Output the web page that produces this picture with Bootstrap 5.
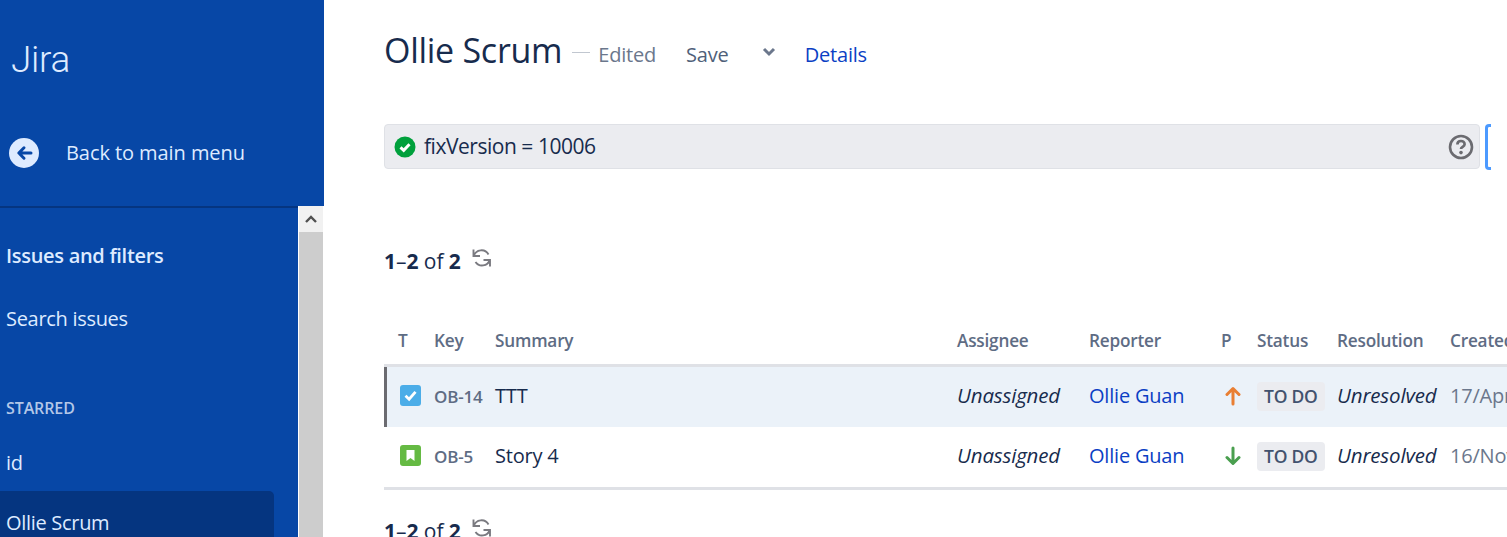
<!DOCTYPE html>
<html lang="en">
<head>
<meta charset="utf-8">
<title>Ollie Scrum</title>
<link rel="stylesheet" href="https://cdn.jsdelivr.net/npm/bootstrap@5.3.0/dist/css/bootstrap.min.css">
<style>
html,body{height:537px;overflow:hidden;background:#fff}
body{font-family:"Open Sans","Noto Sans","Liberation Sans",sans-serif;color:#172b4d;font-size:19px;letter-spacing:-.35px}
.app-shell{height:537px}
.side{width:324px;flex:none;background:#0747a6;color:#deebff;overflow:hidden}
.side-top{height:206px;flex:none;padding:34px 0 0 11px}
.side-brand{font-family:Roboto,"Open Sans",sans-serif;font-size:37px;font-weight:300;line-height:52px;letter-spacing:-.3px;margin-bottom:50px}
.side-back{margin-left:-2px;gap:27px;font-size:20px;line-height:30px;letter-spacing:-.07px;padding-top:2px}
.back-ico{width:30px;height:30px;flex:none;display:block}
.side-rule{height:2px;flex:none;background:#053580;width:299px}
.side-body{min-height:0}
.side-nav{width:298px;flex:none;padding:33px 0 0 6px;line-height:30px;font-size:20px;letter-spacing:-.3px}
.side-head{font-weight:600;line-height:30px}
.side-link{margin-top:33px}
.side-label{font-size:16px;font-weight:600;color:#b3c7e8;margin-top:64px;line-height:20px;letter-spacing:-.1px}
.side-id{margin-top:30px}
.side-active{background:#053580;width:274px;margin:13px 0 0 -6px;padding:17px 0 0 6px;height:60px;border-radius:0 5px 0 0}
.side-scroll{width:26px;flex:none;background:#fff;margin-top:-2px}
.scroll-btn{width:24px;height:26px;margin-left:1px;background:#f1f1f1;display:flex;align-items:center;justify-content:center}
.scroll-track{width:24px;height:330px;margin-left:1px;background:#cdcdcd}
.page{padding:0 0 0 60px;min-width:0}
.page-head{height:124px;padding-top:26px;align-items:flex-start}
.page-title{font-size:34px;line-height:48px;font-weight:400;margin:0;letter-spacing:-.27px}
.dash{width:18px;height:1px;background:#c1c7d0;margin:26px 8px 0 10px}
.meta{line-height:30px;margin-top:14px;color:#6b778c;font-size:20px;letter-spacing:-.22px}
.meta-save{color:#505f79;margin:14px 0 0 30px;line-height:30px;font-size:20px;letter-spacing:-.15px}
.meta-chev{margin:21px 0 0 33px;display:block}
.meta-link{color:#0b3fc4;text-decoration:none;margin:14px 0 0 29px;line-height:30px;font-size:20px;letter-spacing:-.2px}
.jql-row{gap:5px}
.jql-box{width:1096px;height:45px;flex:none;background:#ebecf0;border:1px solid #dfe1e6;border-radius:4px;padding:0 5px 0 9px;font-size:21px;letter-spacing:-.47px}
.jql-ok{margin-right:8px;display:block}
.jql-bracket{width:6px;height:46px;border:3px solid #4c9aff;border-right:0;border-radius:4px 0 0 4px;flex:none}
.pager{margin-top:75px;line-height:32px;font-size:21px;height:32px;letter-spacing:-.05px}
.pager-ref{margin:-7px 0 0 10px;display:block}
.pager b{font-weight:700}
.issue-wrap{margin-top:44px;width:1300px}
.issue-grid{width:1300px;table-layout:fixed;margin:0;border-collapse:separate;border-spacing:0;--bs-table-bg:transparent;--bs-table-color:#172b4d}
.issue-grid th,.issue-grid td{border:0;padding:0 6px;white-space:nowrap;overflow:hidden;vertical-align:middle}
.issue-grid th{height:46px;font-size:17.2px;font-weight:600;color:#5e6c84;vertical-align:top;line-height:32px;padding-top:4px;letter-spacing:-.2px;border-bottom:3px solid #dfe1e6}
.issue-grid td{height:60px;font-size:20px;letter-spacing:-.2px;padding-bottom:3px}
.issue-grid tbody tr:last-child td{height:63px;border-bottom:3px solid #dfe1e6}
.issue-grid tbody tr.cur td{background:#ebf2f9}
.issue-grid tbody tr.cur td:first-child{box-shadow:inset 3px 0 0 #6b6b70}
.issue-grid em{font-size:20.5px;letter-spacing:-.17px}
.w-t{width:44px}.w-k{width:61px}.w-s{width:462px}.w-a{width:132px}.w-r{width:132px}.w-p{width:36px}.w-st{width:80px}.w-res{width:113px}.w-c{width:240px}
.issue-grid th.w-t{padding-left:14px;padding-right:0}
.issue-grid td.cell-t{padding-left:13px;padding-right:0}
.k-key{font-size:17px;font-weight:600;color:#5e6c84;letter-spacing:-.2px}
.person{color:#0b3fc4;text-decoration:none}
.todo{display:inline-block;background:#ebecf0;color:#42526e;font-size:17.5px;font-weight:600;line-height:29px;padding:0 7px;border-radius:4px;letter-spacing:-.25px}
.date{color:#6b778c}
.type-ico,.prio-ico{display:block}
.type-ico{margin-left:3px}
.prio-ico{margin-left:4px}
.pager-end{margin-top:25px}
</style>
</head>
<body>
<div class="app-shell d-flex">
  <aside class="side d-flex flex-column">
    <div class="side-top">
      <div class="side-brand">Jira</div>
      <div class="side-back d-flex align-items-center">
        <svg class="back-ico" viewBox="0 0 30 30"><circle cx="15" cy="15" r="15" fill="#deebff"/><path d="M22 15H10M15 9.8 9.8 15l5.2 5.2" fill="none" stroke="#0747a6" stroke-width="3" stroke-linecap="round" stroke-linejoin="round"/></svg>
        <span>Back to main menu</span>
      </div>
    </div>
    <div class="side-rule"></div>
    <div class="side-body d-flex flex-grow-1">
      <nav class="side-nav">
        <div class="side-head">Issues and filters</div>
        <div class="side-link">Search issues</div>
        <div class="side-label">STARRED</div>
        <div class="side-id">id</div>
        <div class="side-active">Ollie Scrum</div>
      </nav>
      <div class="side-scroll">
        <div class="scroll-btn"><svg width="12" height="8" viewBox="0 0 12 8"><path d="M1 7l5-5 5 5" fill="none" stroke="#505050" stroke-width="2.4"/></svg></div>
        <div class="scroll-track"></div>
      </div>
    </div>
  </aside>
  <main class="page flex-grow-1 overflow-hidden">
    <div class="page-head d-flex">
      <h1 class="page-title">Ollie Scrum</h1>
      <span class="dash"></span>
      <span class="meta">Edited</span>
      <span class="meta-save">Save</span>
      <svg class="meta-chev" width="14" height="10" viewBox="0 0 14 10"><path d="M2 2l5 5 5-5" fill="none" stroke="#6b778c" stroke-width="3"/></svg>
      <a class="meta-link" href="#">Details</a>
    </div>
    <div class="jql-row d-flex">
      <div class="jql-box d-flex align-items-center">
        <svg class="jql-ok" width="22" height="22" viewBox="0 0 22 22"><circle cx="11" cy="11" r="10.5" fill="#00a03c"/><path d="M6.5 11.3l3.2 3 5.8-6" fill="none" stroke="#fff" stroke-width="3"/></svg>
        <span class="flex-grow-1">fixVersion = 10006</span>
        <svg width="26" height="26" viewBox="0 0 26 26"><circle cx="13" cy="13" r="11" fill="none" stroke="#6b6b70" stroke-width="2.6"/><path d="M9.4 10.5c0-4.6 7.2-4.6 7.2-.3 0 2.6-3.6 2.7-3.6 4.8" fill="none" stroke="#6b6b70" stroke-width="2.7"/><circle cx="13" cy="18.6" r="1.8" fill="#6b6b70"/></svg>
      </div>
      <div class="jql-bracket"></div>
    </div>
    <div class="pager d-flex align-items-center">
      <span><b>1</b>–<b>2</b> of <b>2</b></span>
      <svg class="pager-ref" width="21" height="20" viewBox="0 0 21 20"><path d="M2.5 1.5V8H9M2.8 8A8 8 0 0 1 17.5 6.5M19 18.5V12h-6.5M18.7 12A8 8 0 0 1 4.5 14" fill="none" stroke="#7a7a80" stroke-width="1.9"/></svg>
    </div>
    <div class="issue-wrap">
      <table class="table issue-grid">
        <thead>
          <tr><th class="w-t">T</th><th class="w-k">Key</th><th class="w-s">Summary</th><th class="w-a">Assignee</th><th class="w-r">Reporter</th><th class="w-p">P</th><th class="w-st">Status</th><th class="w-res">Resolution</th><th class="w-c">Created</th></tr>
        </thead>
        <tbody>
          <tr class="cur">
            <td class="cell-t"><svg class="type-ico" width="21" height="21" viewBox="0 0 21 21"><rect width="21" height="21" rx="3" fill="#4bade8"/><path d="M5.5 10.8l3.6 3.4 6.4-7.4" fill="none" stroke="#fff" stroke-width="2.8"/></svg></td>
            <td><span class="k-key">OB-14</span></td>
            <td>TTT</td>
            <td><em>Unassigned</em></td>
            <td><a class="person" href="#">Ollie Guan</a></td>
            <td><svg class="prio-ico" width="16" height="20" viewBox="0 0 16 20"><path d="M8 18V3M2 8.5 8 2.5l6 6" fill="none" stroke="#e97f33" stroke-width="3" stroke-linecap="round" stroke-linejoin="round"/></svg></td>
            <td><span class="todo">TO DO</span></td>
            <td><em>Unresolved</em></td>
            <td class="date">17/Apr/23</td>
          </tr>
          <tr>
            <td class="cell-t"><svg class="type-ico" width="21" height="21" viewBox="0 0 21 21"><rect width="21" height="21" rx="3" fill="#65ba43"/><path d="M6.5 5h8v11l-4-3-4 3z" fill="#fff"/></svg></td>
            <td><span class="k-key">OB-5</span></td>
            <td>Story 4</td>
            <td><em>Unassigned</em></td>
            <td><a class="person" href="#">Ollie Guan</a></td>
            <td><svg class="prio-ico" width="16" height="20" viewBox="0 0 16 20"><path d="M8 2v15M2 11.5l6 6 6-6" fill="none" stroke="#4a9f4f" stroke-width="3" stroke-linecap="round" stroke-linejoin="round"/></svg></td>
            <td><span class="todo">TO DO</span></td>
            <td><em>Unresolved</em></td>
            <td class="date">16/Nov/22</td>
          </tr>
        </tbody>
      </table>
    </div>
    <div class="pager pager-end d-flex align-items-center">
      <span><b>1</b>–<b>2</b> of <b>2</b></span>
      <svg class="pager-ref" width="21" height="20" viewBox="0 0 21 20"><path d="M2.5 1.5V8H9M2.8 8A8 8 0 0 1 17.5 6.5M19 18.5V12h-6.5M18.7 12A8 8 0 0 1 4.5 14" fill="none" stroke="#7a7a80" stroke-width="1.9"/></svg>
    </div>
  </main>
</div>
<script src="https://cdn.jsdelivr.net/npm/bootstrap@5.3.0/dist/js/bootstrap.bundle.min.js"></script>
</body>
</html>
